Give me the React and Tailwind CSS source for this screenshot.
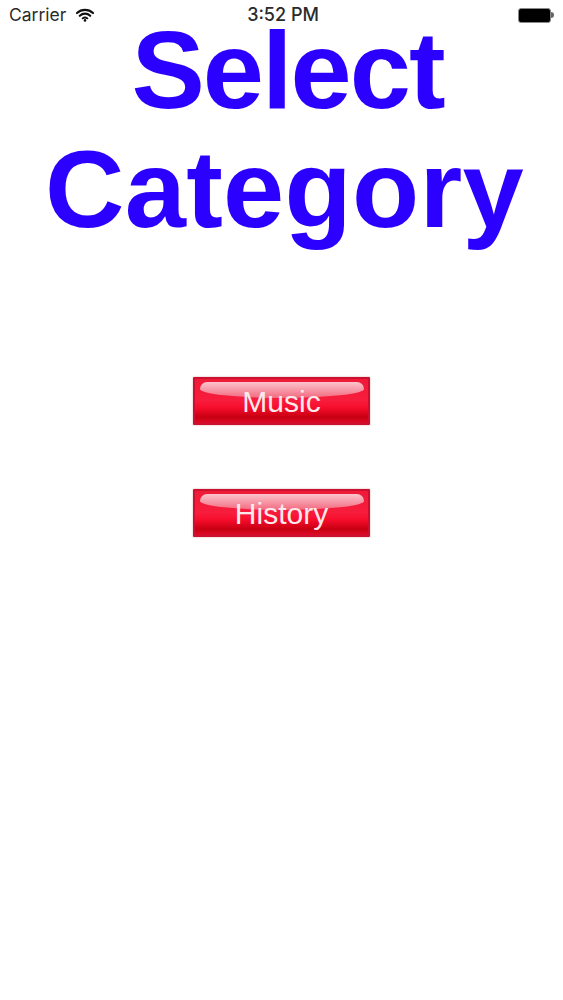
import React from 'react';

const StatusBar = () => (
  <div className="h-[30px] flex items-center justify-between pl-[9px] pr-[9px] text-[#2a2a2a] font-['Inter',sans-serif]">
    <div className="flex items-center gap-[10px] w-[120px]">
      <span className="text-[17.5px] leading-none">Carrier</span>
      <svg width="18" height="14" viewBox="0 0 18 14" fill="none" stroke="#111" strokeLinecap="round">
        <path d="M1 5 C5.5 .8 12.5 .8 17 5" strokeWidth="2.2" />
        <path d="M3.8 7.8 C6.8 5 11.2 5 14.2 7.8" strokeWidth="2.2" />
        <path d="M6.6 10.4 C8 9.3 10 9.3 11.4 10.4" strokeWidth="1.8" />
        <circle cx="9" cy="12.4" r="1.3" fill="#111" stroke="none" />
      </svg>
    </div>
    <span className="pl-[3px] text-[18px] font-medium leading-none">3:52 PM</span>
    <div className="flex items-center justify-end w-[120px]">
      <div className="w-[33px] h-[15px] rounded-[3px] border-[1.5px] border-[#8a8a8a] bg-black" />
      <div className="w-[3px] h-[6px] rounded-r-sm bg-[#666]" />
    </div>
  </div>
);

const GlossButton = ({ label }) => (
  <button className="relative w-[177px] h-[48px] pt-[2px] border-2 border-[#cb1030] rounded-[1px] bg-[linear-gradient(#ee1a38_0%,#f81c3c_50%,#f60c2c_66%,#c80012_86%,#dc0a28_100%)] text-[#fde8ea] text-[30px] leading-none font-['Liberation_Sans',sans-serif] shadow-[0_0_2px_rgba(150,0,20,0.4)]">
    <span className="absolute left-[5px] right-[4px] top-[3px] h-[16px] rounded-t-[7px] rounded-b-[50%_9px] bg-[linear-gradient(#fbc4cc,#f26a80)]" />
    <span className="relative">{label}</span>
  </button>
);

export default function App() {
  return (
    <div className="w-[563px] h-[1000px] bg-white overflow-hidden flex flex-col">
      <StatusBar />
      <h1 className="pl-[6px] flex flex-col gap-[39px] text-center text-[#2b00ff] font-['Liberation_Sans',sans-serif] font-bold text-[110px] leading-[80px]">
        <span className="pl-[6px] tracking-[-2px]">Select</span>
        <span className="tracking-[0.25px]">Category</span>
      </h1>
      <div className="mt-[148px] flex flex-col items-center gap-[64px]">
        <GlossButton label="Music" />
        <GlossButton label="History" />
      </div>
    </div>
  );
}
